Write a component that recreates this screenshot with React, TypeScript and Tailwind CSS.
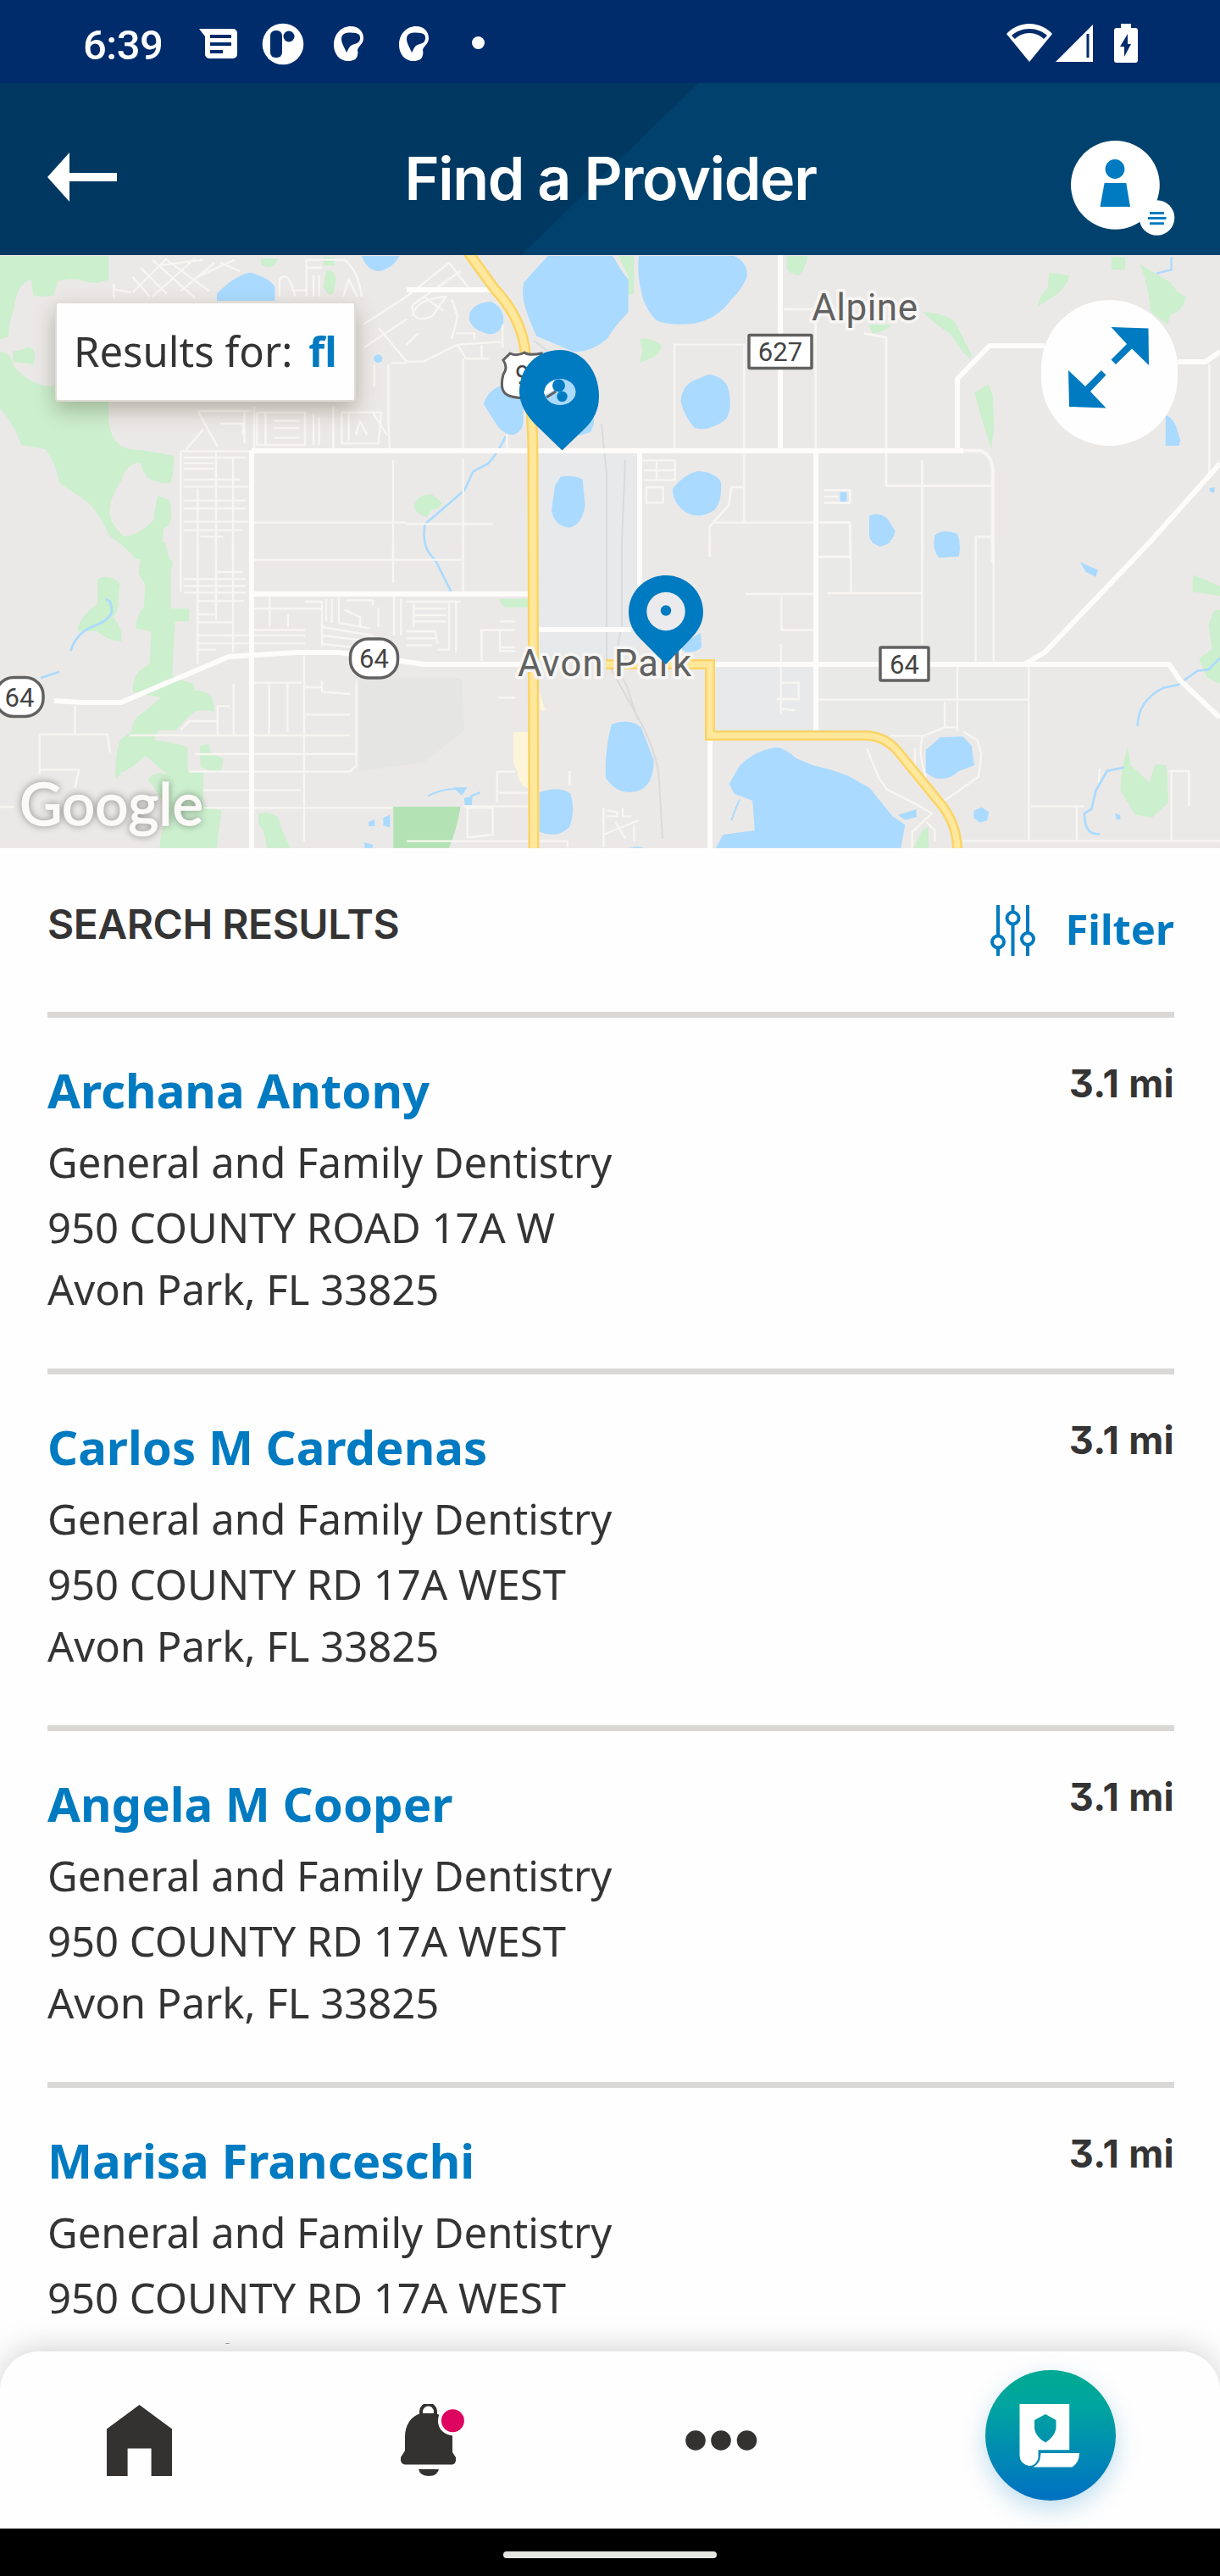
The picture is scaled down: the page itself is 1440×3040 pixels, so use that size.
import type { ReactNode } from 'react';

const providers = [
  { name: 'Archana Antony', street: '950 COUNTY ROAD 17A W' },
  { name: 'Carlos M Cardenas', street: '950 COUNTY RD 17A WEST' },
  { name: 'Angela M Cooper', street: '950 COUNTY RD 17A WEST' },
  { name: 'Marisa Franceschi', street: '950 COUNTY RD 17A WEST' },
];

function StatusBar() {
  return (
    <div className="flex h-[98px] shrink-0 items-start bg-[#002c6c] pt-[26px] pr-[97px] pl-[98px] text-white">
      <span className="w-[137px] font-['Roboto',sans-serif] text-[49px] leading-[55px] font-medium tracking-[-0.5px]">6:39</span>
      <svg className="mt-[7px] h-[37px] w-[46px]" viewBox="0 0 46 37" fill="none">
        <path d="M0 1H40a5 5 0 0 1 5 5v25a5 5 0 0 1-5 5H12a5 5 0 0 1-5-5V10Z" fill="#fff" />
        <path d="M13 10h25M13 19h25M13 28h15" stroke="#002c6c" strokeWidth="4" />
      </svg>
      <svg className="mt-[1px] ml-[28px] h-[50px] w-[50px]" viewBox="0 0 50 50">
        <circle cx="25" cy="25" r="24.3" fill="#fff" />
        <rect x="10" y="9" width="14" height="32" rx="6" fill="#002c6c" />
        <circle cx="32" cy="16" r="6.5" fill="#002c6c" />
      </svg>
      {[0, 1].map((i) => (
        <svg key={i} className={i === 0 ? 'mt-[4px] ml-[34px] h-[43px] w-[38px]' : 'mt-[4px] ml-[39px] h-[43px] w-[38px]'} viewBox="0 0 38 43">
          <path d="M21 1C30 1 36 7 36 15c0 7-6 9-7 14 0 2 1 2 0 6-1 5-5 7-11 7C8 42 1 34 1 23 1 10 10 1 21 1Z" fill="#fff" />
          <path d="M13 10C17 8 27 8 31 11c2 3 1 7-1 9-3 2-6 2-9 4-3 3-3 5-5 8-2-5-6-11-6-16 0-3 1-5 3-6Z" fill="#002c6c" />
        </svg>
      ))}
      <span className="mt-[17px] ml-[49px] h-[15px] w-[15px] rounded-full bg-white" />
      <svg className="mt-[2px] ml-auto h-[46px] w-[54px]" viewBox="0 0 54 46">
        <path d="M27 0C16 0 6 5 0 12l27 33L54 12C48 5 38 0 27 0Z" fill="#fff" />
        <path d="M6 14C11 9 19 6 27 6s16 3 21 8l-4 4c-4-4-10-7-17-7s-13 3-17 7Z" fill="#002c6c" />
      </svg>
      <svg className="mt-[3px] ml-[4px] h-[44px] w-[44px]" viewBox="0 0 44 44">
        <path d="M44 0V44H0Z" fill="#fff" />
        <path d="M38 11V39" stroke="#002c6c" strokeWidth="3" />
      </svg>
      <svg className="mt-[2px] ml-[25px] h-[46px] w-[28px]" viewBox="0 0 28 46">
        <path d="M8 0H20V5h5a3 3 0 0 1 3 3V43a3 3 0 0 1-3 3H3a3 3 0 0 1-3-3V8a3 3 0 0 1 3-3H8Z" fill="#fff" />
        <path d="M16 12 7 27h5v12l8-15h-4Z" fill="#002c6c" />
      </svg>
    </div>
  );
}

function Header() {
  return (
    <div className="relative flex h-[203px] shrink-0 items-start justify-between bg-[linear-gradient(135.8deg,#003861_49.9%,#00426d_50.1%)] pt-[65px] pr-[53px] pl-[55px]">
      <svg className="mt-[17px] h-[58px] w-[123px]" viewBox="0 0 123 58">
        <path d="M1 29 27 0V24H83V34H27V58Z" fill="#fff" />
      </svg>
      <h1 className="mt-[6px] font-['Inter',sans-serif] text-[70px] leading-[84px] font-semibold tracking-[-1.35px] whitespace-nowrap text-white">Find a Provider</h1>
      <svg className="h-[116px] w-[124px]" viewBox="1263 163 124 116">
        <circle cx="1316.4" cy="218.3" r="52.4" fill="#fff" />
        <circle cx="1316" cy="199.5" r="11.4" fill="#007ac0" />
        <path d="M1303.6 216h25.7l4.7 28h-35.5Z" fill="#007ac0" />
        <circle cx="1365.5" cy="257" r="20.8" fill="#fff" />
        <path d="M1357 251.5h17M1355 257.5h21.5M1357 263.8h17" stroke="#007ac0" strokeWidth="3" />
      </svg>
    </div>
  );
}

/* One map sheet; its content is drawn on a grid three times finer than the map. */
function Sheet({ x, y, children }: { x: number; y: number; children: ReactNode }) {
  return <g transform={`translate(${x} ${y}) scale(0.333333)`}>{children}</g>;
}

const PARK = '#ccefce';
const WATER = '#aadaff';

function Shield({ x, y, w, h, r, label }: { x: number; y: number; w: number; h: number; r: number; label: string }) {
  return (
    <g>
      <rect x={x} y={y} width={w} height={h} rx={r} fill="#fff" stroke="#616161" strokeWidth="3.5" />
      <text x={x + w / 2} y={y + h / 2 + 11} textAnchor="middle" fontFamily="Roboto, sans-serif" fontSize="31" fill="#444">{label}</text>
    </g>
  );
}

function MapDrawing() {
  return (
    <svg className="block h-[700px] w-[1440px]" viewBox="0 301 1440 700">
      <rect x="0" y="300" width="1440" height="702" fill="#ebe9e7" />
      <path d="M636 535H755V785H636Z M845 785H960V865H845Z" fill="#e8e9ea" />
      <path d="M965 535H1170V785H965Z M960 790H1215V868H960Z" fill="#e9e9e7" />
      <path d="M424 800H545L548 862 500 900 424 910Z" fill="#e5e5e3" />

      {/* Parks and water */}
      <Sheet x={0} y={300}>
        <path fill={PARK} d="M0 6H385V90Q330 110 300 95Q250 80 205 95L190 145Q150 155 118 145L110 90Q70 100 55 160Q50 200 35 240L30 290Q10 300 0 300ZM45 345L100 330Q130 325 120 390Q80 385 45 380ZM0 345Q40 350 45 390Q80 440 150 465L385 470V600Q400 680 460 690Q540 695 615 715Q620 740 605 810Q560 815 520 790Q500 760 500 740Q450 735 430 800Q390 860 388 910Q390 960 440 1000Q500 990 545 940Q545 900 560 855L600 870Q620 960 580 970Q570 1040 590 1080H480Q440 1030 390 1000Q340 900 300 870L210 810Q200 740 160 690L75 675Q50 600 0 545Z" />
        <path fill={PARK} d="M925 15H985L970 40Q950 55 925 35ZM1155 60Q1180 50 1190 85L1180 140Q1160 150 1145 115ZM1145 10h40v30h-40Z" />
        <path fill={WATER} d="M768 165V140Q830 75 885 65Q950 80 973 115V165ZM1280 6Q1300 60 1345 60Q1390 50 1415 6Z" />
        <circle cx="1339" cy="370" r="15" fill={WATER} />
      </Sheet>
      <Sheet x={0} y={640}>
        <path fill={PARK} d="M430 0H585L600 60Q620 70 605 100V235H670V280H620L610 470Q640 490 685 500L690 525Q760 520 760 600Q720 590 690 600Q640 640 625 665H560L545 700Q640 710 665 730V810H720V930L785 950Q775 1010 768 1082H565Q570 1000 600 950L525 840Q540 810 590 820L515 755Q470 800 430 815L410 840Q405 760 425 700L465 670Q470 620 510 600L570 550L470 530Q470 470 500 450L530 430L535 315L480 305Q490 240 510 230L515 150L490 110Q505 40 480 20Z" />
        <path fill={PARK} d="M345 130Q390 110 425 145L420 190Q420 250 400 265Q435 300 430 350Q380 350 345 315H275Q280 260 345 220ZM708 720L740 715L745 745L790 765Q790 800 775 820L710 795ZM915 960Q960 950 985 975Q1000 1030 1030 1082H945Q935 1010 915 1000Z" />
        <path fill="#b3e2b4" d="M1393 936H1630Q1620 1010 1590 1082H1393Z" />
        <path fill={WATER} d="M1305 990l20-10 3 25h-22ZM1357 975l24-10v45l-24-8ZM1290 1062l30 8v12h-28Z" />
        <path d="M375 200Q400 210 395 250Q380 280 335 295Q270 320 250 385M145 480L210 458" fill="none" stroke={WATER} strokeWidth="8" />
      </Sheet>
      <Sheet x={480} y={300}>
        <path fill={PARK} d="M750 6H805V140L785 145V80ZM825 300Q870 295 905 325Q890 365 860 370L825 385L835 340ZM1345 6H1420Q1410 65 1385 75Q1345 65 1345 45ZM25 890Q40 850 90 850L125 880Q115 905 90 905L70 930Q30 920 25 890Z" />
        <path fill={WATER} d="M500 6H730Q760 60 785 90V205Q740 250 710 300Q650 350 590 345Q510 310 460 290Q440 250 420 190Q405 140 415 100Q450 60 500 6ZM822 6H1160Q1210 30 1205 80Q1190 120 1150 160Q1100 230 1020 245Q930 255 885 235Q840 190 830 130Q815 60 822 6ZM222 210Q240 170 300 168Q345 190 343 240Q330 285 290 283Q235 270 222 235ZM335 465Q290 480 272 530L310 590Q340 640 375 640Q415 630 413 580V500ZM660 570Q670 600 650 630L612 642L580 600ZM1070 425Q1130 435 1140 480Q1155 550 1130 585Q1070 630 1020 615Q985 580 970 520Q975 470 1010 450ZM1030 768Q1090 770 1112 805Q1120 870 1090 905Q1040 940 990 915Q940 880 942 830Q980 780 1030 768ZM545 788Q590 780 623 798L632 890Q620 960 575 968Q520 960 513 905L525 820Z" />
        <path d="M350 645Q325 700 290 740L235 770L205 835L130 900L65 955Q50 1040 100 1080L145 1170L165 1210" fill="none" stroke={WATER} strokeWidth="8" />
      </Sheet>
      <Sheet x={960} y={300}>
        <path fill={PARK} d="M388 205Q480 210 505 245L562 360L555 370Q510 330 490 285Q430 250 388 205ZM835 65L908 75Q890 130 850 150L795 185Q795 150 830 120ZM1055 10H1105V55H1055ZM1155 35L1265 100Q1290 140 1320 150Q1310 200 1265 215L1255 250L1195 205Q1185 100 1155 35ZM195 250H275Q260 275 210 280ZM570 490L620 460L636 500L640 620L630 690Q600 600 570 490Z" />
        <path fill={WATER} d="M1248 570Q1270 575 1285 610L1300 660L1295 678H1247ZM198 925Q240 910 265 940L290 980Q280 1025 235 1035Q200 1020 198 995ZM430 995Q460 970 510 990Q525 1030 515 1070L445 1075Q420 1045 430 995ZM95 842h23v35H95ZM1402 828l20-2-2 18-16-3Z" />
        <path d="M1268 10V55L1215 68" fill="none" stroke={WATER} strokeWidth="7" />
      </Sheet>
      <Sheet x={480} y={640}>
        <path fill={PARK} d="M325 200H440V230H345Z" />
        <path fill="#fdf5d9" d="M378 672H430V870Q395 860 392 810L378 780ZM470 530L492 595H470Z" />
        <path fill={WATER} d="M1040 320L1045 370Q1030 390 990 390L960 370ZM725 645Q790 620 830 655L875 770Q875 860 820 880Q750 900 705 835Q700 740 725 645ZM470 885Q540 860 580 890Q600 950 575 1010Q530 1050 470 1025ZM1440 790L1380 765Q1330 720 1300 727Q1230 740 1180 790L1142 855L1160 890L1225 915L1232 1020L1120 1035L1095 1082H1750L1765 1000L1720 970L1640 870L1560 825L1500 805ZM165 868h50l-20 28ZM203 905l30-5-2 30h-25ZM790 1082q30-10 50 0Z" />
        <path d="M75 898Q130 870 180 873M225 900l35-15M1180 910Q1160 950 1150 985" fill="none" stroke={WATER} strokeWidth="6" />
      </Sheet>
      <Sheet x={960} y={640}>
        <path fill={WATER} d="M205 0H275L240 14ZM945 70L1008 98L1000 122L965 105ZM398 735L450 690L530 688L560 720L570 790L515 810Q480 845 430 835L398 815ZM568 950L595 938L622 955L615 985L590 992L568 975ZM1068 960l18 5 2 15-14 3ZM300 965l65-20v28l-40 10Z" />
        <path fill={PARK} d="M1345 115Q1380 130 1440 155V190L1342 175ZM1420 240H1440V500L1395 480L1365 410L1412 380L1400 290ZM1112 720L1125 790L1190 850L1210 785L1250 790L1258 920L1200 975L1140 965L1088 880L1092 810ZM355 1082L385 1020L408 1005V1082Z" />
        <path d="M1440 410L1400 450L1360 455L1290 505L1240 515Q1150 560 1148 650M1100 797L1040 810L1000 880L985 945L960 960Q960 1040 1015 1032" fill="none" stroke={WATER} strokeWidth="8" />
      </Sheet>

      {/* Local streets */}
      <g fill="none" stroke="#f8f6f2" strokeLinejoin="round">
        <Sheet x={0} y={300}>
          <path strokeWidth="7" d="M403 105V155M403 125L465 135M470 80L530 150M500 50L590 140M540 20L690 155M590 20L740 130M470 135L590 15M540 150L690 15M640 130L760 30M560 40L720 20M700 80L830 20M780 30L850 60M990 150V90Q1020 50 1045 150M1085 150V20H1220Q1270 60 1280 150M1085 48H1140M1110 150V75M1130 150V75M1215 150L1235 90L1265 150M1045 128H1085M1440 150L1285 250M1440 230L1290 330M1340 260L1440 380M1385 385H1440M1325 390V470M1375 390V600L1380 690M900 540V690M700 555H890M700 555L770 680M720 620L660 690M780 600H860V640M865 560V670M910 560V675H1080V560H910M940 560V675M970 590H1060M970 615H1060M970 650H1060M1110 565V675M1130 575V675M1180 540V690M1210 560V670H1340L1350 560H1210M1235 560V660M1260 640L1275 590L1300 640M1320 560L1370 640M640 697H890M640 697V1080M765 700V1080M825 720V1080M700 830V1080M650 720H870M650 740H760M650 760H760M650 798H850M650 823H880M650 872H870M650 900H870M650 947H880M650 977H860M710 1000H790M900 950H1440M1392 730V1080" />
        </Sheet>
        <Sheet x={0} y={640}>
          <path strokeWidth="7" d="M640 0V175M700 0V430M765 0V275M825 0V390M900 62H1440M1392 0V145M765 105H860M650 130H870M650 155H870M650 178H870M700 208H865M700 255H765M700 283H825M700 330H1080M700 358H1080M700 380H765M900 235H1140M900 310H1080M955 190V300M1020 255V300M1080 210H1140V370M1155 200V280M1175 200V285M1200 190V285L1310 305M1225 205H1320V225M1220 240L1275 265V300M1140 300L1320 330M1140 330L1310 350M1140 360L1240 370M1340 230V300M1395 190V330M1420 200V330M265 580V680M140 820V680H380L390 745M140 805H280L265 870M0 937H50M460 683H1240M640 665L670 633H770V580H815M770 633V680M827 500V680M900 497H1070M953 500V680M1018 500V670M1077 400V1060M1080 513H1140M1140 490V530L1240 537M1080 610H1240M690 750H1260M670 812H1240L1262 790M720 877H1065M720 940H1390M1262 490V790" />
        </Sheet>
        <Sheet x={480} y={300}>
          <path strokeWidth="7" d="M0 150L150 30M20 180L190 60M20 220Q30 160 140 150L90 220Q20 250 20 180M60 150L130 200M150 30L220 120M0 320L40 280M0 380H60L180 320L340 310M160 300L180 220L160 160M180 320L210 370H290M265 320V370M175 280H240V300M340 250V330M200 370V690M355 640V690M200 725V1080M0 955H305M948 690V320H1195V690M1335 195H1440M835 730H950V800H840M885 730V800M840 765H950M848 825H908V880H848ZM1195 710V950M1440 950H1085L1073 965V1070M1085 950L1140 890L1150 825H1195" />
        </Sheet>
        <Sheet x={480} y={640}>
          <path strokeWidth="7" d="M0 62H195M200 0V180M1073 0V50M0 210H190M25 215V300M30 235H140M30 258H140M30 280H140M0 315H100L110 360M0 340H100M0 365H90M150 215V380H110M175 215V390M265 420V310H385M330 280H385M330 310V385H385M330 372H385M325 550H385M320 920V812H385M325 887H430M215 940H305V1035L215 1045ZM200 935H430M0 1058H570V1080M697 1080V940M710 950l35 5v15h-35M765 940v30h30M697 1035L820 985M740 990L775 1050M805 1000V1060M577 810V860M1200 183H1440M1327 190V310H1440M1325 360V610M1325 497H1388V555H1310M1330 590l45 5" />
        </Sheet>
        <Sheet x={960} y={300}>
          <path strokeWidth="8" d="M8 240V690M180 280L258 295V820H630M385 730V1080M38 835H130V880H38M38 858H90M20 950H130V1080M20 1072H130M575 1080V1000H635M1402 390V780" />
          <path strokeWidth="12" d="M530 695H590Q635 710 635 770V1090" />
        </Sheet>
        <Sheet x={960} y={640}>
          <path strokeWidth="7" d="M133 0V180M20 50H130M50 180H385M385 0V360M575 0V425M638 0V430M510 440V670M763 440V1055M0 557H765M465 565V655H510M270 685H390L465 655M360 730V790M385 690Q370 760 400 830M530 670L580 700L595 750L585 830L465 915M190 730L230 830L260 875L360 925L420 960L350 1025V1082M400 990L430 1020V1060M770 935H960M933 935V1055M530 1057H1440M1268 810V1055M1258 810H1330V935M1015 800L1010 850" />
        </Sheet>
      </g>
      <path d="M630 402L645 413M710 500L716 560V780L755 850Q776 890 778 920L782 990M738 543L734 640V740Q722 780 740 810L753 850" fill="none" stroke="#d9dadb" strokeWidth="2" />

      {/* Main roads */}
      <g fill="none" stroke="#fdfcfa" strokeWidth="6" strokeLinejoin="round">
        <path d="M297 532H1137M297 532V1001M300 701H627M636 743H745M755 532V743M921 300V532M963 532V863M838 869V1001M480 342H590" />
        <path d="M64 827L97 829H143L187 810L270 775L350 770H400L480 781L500 784H615M840 784H1380L1393 803L1440 847M1207 785L1233 770L1357 640L1440 547M1130 532V447L1168 408H1233M1390 427H1423L1440 415" />
      </g>
      <g fill="none" strokeLinejoin="miter">
        <path d="M552 297L583 340Q613 372 619 408Q629 480 629 540L630 1004" stroke="#fad465" strokeWidth="13" />
        <path d="M552 297L583 340Q613 372 619 408Q629 480 629 540L630 1004" stroke="#ffe79c" strokeWidth="8" />
        <path d="M715 784H838V868H1023Q1045 869 1060 887L1113 952Q1130 975 1130 1004" stroke="#fad465" strokeWidth="12" />
        <path d="M715 784H838V868H1023Q1045 869 1060 887L1113 952Q1130 975 1130 1004" stroke="#ffe79c" strokeWidth="7" />
      </g>

      {/* Labels */}
      <g fontFamily="Roboto, sans-serif" fill="#616161" stroke="#f7f6f4" strokeWidth="7" strokeLinejoin="round" style={{ paintOrder: 'stroke' }}>
        <text x="958" y="377.5" fontSize="44" textLength="125">Alpine</text>
        <text x="611" y="797.5" fontSize="43.5" textLength="205">Avon Park</text>
      </g>
      <Shield x={884} y={395.5} w={74} h={39} r={1} label="627" />
      <Shield x={1039} y={764} w={57} h={39} r={1} label="64" />
      <Shield x={413.5} y={754} w={56} h={46} r={21} label="64" />
      <Shield x={-5} y={799.5} w={56} h={46} r={21} label="64" />
      <path d="M602 417l-8 8q6 9 0 17-6 23 10 26 10 2 15 2h20v-53q-15 3-20-1-9 5-17 1Z" fill="#fff" stroke="#616161" strokeWidth="3" />
      <text x="608" y="453" fontFamily="Roboto, sans-serif" fontSize="31" fill="#444">98</text>

      {/* Pins */}
      <path d="M661 413C687 413 707 437 707 468 707 484 700 496 691 505L663.500 531.500 632 501C621 490 613 476 613 462 613 433 634 413 661 413Z" fill="#007ac0" />
      <ellipse cx="661" cy="462.500" rx="18.500" ry="15.500" fill={WATER} />
      <path d="M642 464Q643 453 654 449L653 461 644 466Z" fill="#fff" />
      <path d="M645 469L656 462" stroke="#616161" strokeWidth="3" />
      <circle cx="659.500" cy="455" r="7.500" fill="#007ac0" />
      <circle cx="663.500" cy="468" r="6.200" fill="#007ac0" />
      <path d="M786 679C810 679 830 698 830 722 830 735 824 745 815 754L786 784 756 754C747 745 742 735 742 722 742 698 762 679 786 679Z" fill="#007ac0" />
      <circle cx="786" cy="721.500" r="22.700" fill="#ebebed" />
      <circle cx="786" cy="720.500" r="6.200" fill="#007ac0" />

      <text x="23" y="974" fontFamily="Lato, sans-serif" fontSize="69" textLength="217" lengthAdjust="spacingAndGlyphs" fill="#fbfaf8" stroke="#fbfaf8" strokeWidth="1.500" style={{ filter: 'drop-shadow(0 0 4px rgba(0,0,0,0.4))' }}>Google</text>
    </svg>
  );
}

function MapPanel() {
  return (
    <div className="relative h-[700px] shrink-0">
      <MapDrawing />
      <div className="absolute top-[55px] left-[65px] flex h-[118px] w-[355px] items-center gap-[19px] rounded-[4px] border-2 border-[#dedcd6] bg-[#fefefe] pb-[2px] pl-[20px] font-['Noto_Sans',sans-serif] text-[49px] leading-[66px] text-[#353434] shadow-[0_10px_24px_rgba(60,50,20,0.3)]">
        <span className="whitespace-nowrap">Results for:</span>
        <span className="font-bold text-[#007ac0]">fl</span>
      </div>
      <button className="absolute top-[53px] left-[1229px] h-[172px] w-[161px] rounded-full bg-[#fefefe]">
        <svg className="h-[172px] w-[161px]" viewBox="1229 354 161 172" fill="#007ac0">
          <path d="M1311.500 386L1355.500 387.500 1356 431 1336 411.500 1317 430 1311.500 424.500 1330 406ZM1261 437L1281 456 1300 437 1305.500 442.500 1287 462 1305.500 481.500 1262 480Z" />
        </svg>
      </button>
    </div>
  );
}

function Results() {
  return (
    <div className="h-[1765px] shrink-0 overflow-hidden bg-[#fefefe] pr-[54px] pl-14 text-[#353434]">
      <div className="flex h-[193px] items-start justify-between">
        <h2 className="pt-[60px] font-['Inter',sans-serif] text-[48px] leading-[60px] font-semibold tracking-[-0.5px] whitespace-nowrap">SEARCH RESULTS</h2>
        <div className="flex items-start pt-[62px]">
          <svg className="mt-[5px] h-[60px] w-[54px]" viewBox="0 0 54 60" fill="#fefefe" stroke="#007ac0" strokeWidth="4">
            <path d="M9 0V60M26.500 0V60M44 0V60" />
            <circle cx="9" cy="43.500" r="7" />
            <circle cx="26.500" cy="15.500" r="7" />
            <circle cx="44" cy="40" r="7" />
          </svg>
          <span className="ml-[34px] font-['Noto_Sans',sans-serif] text-[49px] leading-[66px] font-bold text-[#007ac0]">Filter</span>
        </div>
      </div>
      {providers.map((p) => (
        <div key={p.name} className="flex h-[421px] items-start justify-between border-t-[7px] border-[#d9d8d7]">
          <div className="pt-[47px] font-['Noto_Sans',sans-serif] text-[49px] leading-[73px] whitespace-nowrap">
            <div className="text-[56.3px] leading-[76px] font-bold text-[#007ac0]">{p.name}</div>
            <div className="mt-[11px] mb-[4px]">General and Family Dentistry</div>
            <div>{p.street}</div>
            <div>Avon Park, FL 33825</div>
          </div>
          <div className="pt-[53px] font-['Inter',sans-serif] text-[45px] leading-[50px] font-bold tracking-[0.3px] [font-feature-settings:'cv09']">3.1 mi</div>
        </div>
      ))}
    </div>
  );
}

function BottomNav() {
  return (
    <div className="relative z-10 flex h-[218px] shrink-0 flex-col bg-[#fefefe] pt-[9px]">
      <div className="flex h-[209px] items-start rounded-t-[46px] bg-[#fefefe] shadow-[0_-4px_36px_rgba(0,0,0,0.17)]">
        <svg className="mt-[63px] ml-[126px] h-[84px] w-[78px]" viewBox="0 0 78 84">
          <path d="M38.500 0 77 28.500V84H52.600V51.500H24.600V84H0V28.500Z" fill="#333230" />
        </svg>
        <svg className="mt-[62px] ml-[269px] h-[86px] w-[78px]" viewBox="473 2837 78 86">
          <path d="M497 2849v-3a8.500 8.500 0 0 1 17 0v3" fill="none" stroke="#333230" strokeWidth="4" />
          <path d="M497 2848H514C526 2852 534 2862 534 2876V2894L538 2900V2904Q537 2908 534 2908.500H478Q474 2908 473 2904V2900L478 2892V2876C478 2862 485 2851 497 2848Z" fill="#333230" />
          <path d="M494 2914H518Q516 2922 506 2922T494 2914Z" fill="#333230" />
          <circle cx="534.400" cy="2856.700" r="17.500" fill="#fefefe" />
          <circle cx="534.400" cy="2856.700" r="13.500" fill="#dd055f" />
        </svg>
        <svg className="mt-[92px] ml-[258px] h-[26px] w-[86px]" viewBox="0 0 86 26" fill="#333230">
          <circle cx="12" cy="13" r="11.800" />
          <circle cx="42" cy="13" r="11.800" />
          <circle cx="72.500" cy="13" r="11.800" />
        </svg>
        <div className="mt-[22px] ml-[268px] h-[154px] w-[154px] rounded-full bg-[linear-gradient(#00a896_10%,#00a4a0_28%,#0083b8_75%,#0073c0_95%)] shadow-[0_10px_28px_rgba(0,122,192,0.25)]">
          <svg className="h-[154px] w-[154px]" viewBox="1162.500 2797 154 154" fill="#fff">
            <path fillRule="evenodd" d="M1203 2837H1261.700V2891.300H1225V2901Q1222 2910 1214.500 2910Q1203.500 2908 1203 2898ZM1233.500 2849 1246 2856V2866Q1244 2876 1233.500 2882.500Q1222 2876 1220.500 2866V2856Z" />
            <path d="M1228 2895H1273.500Q1273 2907 1265 2911.500H1219Q1227 2907 1227.500 2899Z" />
          </svg>
        </div>
      </div>
    </div>
  );
}

export default function App() {
  return (
    <div className="flex h-[3040px] w-[1440px] flex-col overflow-hidden bg-[#fefefe]">
      <StatusBar />
      <Header />
      <MapPanel />
      <Results />
      <BottomNav />
      <div className="relative z-20 flex h-14 shrink-0 items-start justify-center bg-black pt-[27px]">
        <div className="h-[8px] w-[252px] rounded-full bg-[#e6e6e3]" />
      </div>
    </div>
  );
}
